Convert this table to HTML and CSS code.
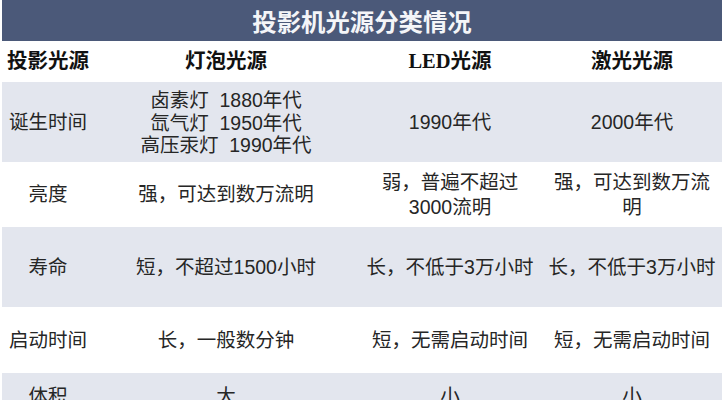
FILE: index.html
```html
<!DOCTYPE html>
<html lang="zh-CN">
<head>
<meta charset="utf-8">
<link rel="stylesheet" href="styles.css">
</head>
<body>
<div class="sheet">
  <div class="title">投影机光源分类情况</div>
  <div class="row head">
    <div class="cell">投影光源</div>
    <div class="cell">灯泡光源</div>
    <div class="cell">LED光源</div>
    <div class="cell">激光光源</div>
  </div>
  <div class="row gray r1">
    <div class="cell">诞生时间</div>
    <div class="cell tight">卤素灯&nbsp;&nbsp;1880年代<br>氙气灯&nbsp;&nbsp;1950年代<br>高压汞灯&nbsp;&nbsp;1990年代</div>
    <div class="cell">1990年代</div>
    <div class="cell">2000年代</div>
  </div>
  <div class="row r2">
    <div class="cell">亮度</div>
    <div class="cell">强，可达到数万流明</div>
    <div class="cell">弱，普遍不超过3000流明</div>
    <div class="cell">强，可达到数万流明</div>
  </div>
  <div class="row gray r3">
    <div class="cell">寿命</div>
    <div class="cell">短，不超过1500小时</div>
    <div class="cell">长，不低于3万小时</div>
    <div class="cell">长，不低于3万小时</div>
  </div>
  <div class="row r4">
    <div class="cell">启动时间</div>
    <div class="cell">长，一般数分钟</div>
    <div class="cell">短，无需启动时间</div>
    <div class="cell">短，无需启动时间</div>
  </div>
  <div class="row gray r5">
    <div class="cell">体积</div>
    <div class="cell">大</div>
    <div class="cell">小</div>
    <div class="cell">小</div>
  </div>
</div>
</body>
</html>
```

FILE: styles.css
```css
html, body {
  margin: 0;
  padding: 0;
  background: #ffffff;
}
body {
  width: 724px;
  height: 400px;
  overflow: hidden;
  font-family: "Liberation Sans", "Noto Sans CJK SC", sans-serif;
  color: #262626;
}
.sheet {
  padding: 0 2px 0 2px;
}
.title {
  height: 41px;
  background: #4b5979;
  color: #f4f5f8;
  font-family: "Noto Sans CJK SC", sans-serif;
  font-weight: 700;
  font-size: 24.4px;
  display: flex;
  align-items: center;
  justify-content: center;
  letter-spacing: 0;
}
.row {
  display: grid;
  grid-template-columns: 92px 264px 184px 180px;
}
.gray {
  background: #e3e6ee;
}
.cell {
  display: flex;
  align-items: center;
  justify-content: center;
  text-align: center;
  font-size: 19.5px;
  line-height: 25px;
  padding: 0 4px;
}
.row .cell:first-child {
  padding: 0;
}
.tight {
  line-height: 22.5px;
  padding-top: 2px;
}
.head {
  height: 41px;
}
.head .cell {
  font-family: "Liberation Serif", "Noto Sans CJK SC", serif;
  font-weight: 700;
  font-size: 20.5px;
  color: #111111;
}
.r1 { height: 80px; }
.r2 { height: 65px; }
.r3 { height: 80px; }
.r4 { height: 66px; }
.r5 { height: 46px; }
```
